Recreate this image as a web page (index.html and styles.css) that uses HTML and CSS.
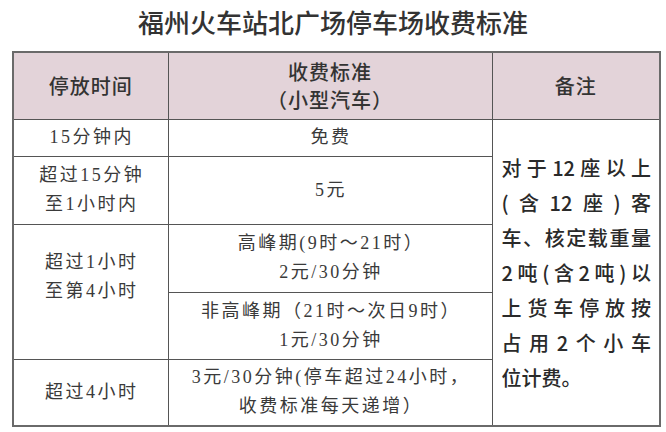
FILE: index.html
```html
<!DOCTYPE html>
<html lang="zh-CN">
<head>
<meta charset="utf-8">
<link rel="stylesheet" href="styles.css">
</head>
<body>
<h1 class="title">福州火车站北广场停车场收费标准</h1>
<div class="wrap">
<table class="fees">
  <colgroup>
    <col class="c1"><col class="c2"><col class="c3">
  </colgroup>
  <tr class="r-head">
    <th>停放时间</th>
    <th>收费标准<br>（小型汽车）</th>
    <th>备注</th>
  </tr>
  <tr class="r1">
    <td>15分钟内</td>
    <td>免费</td>
    <td class="note" rowspan="6">
      <div class="ln">对于12座以上</div>
      <div class="ln">(含12座)客</div>
      <div class="ln">车、核定载重量</div>
      <div class="ln">2吨(含2吨)以</div>
      <div class="ln">上货车停放按</div>
      <div class="ln">占用2个小车</div>
      <div class="ln last">位计费。</div>
    </td>
  </tr>
  <tr class="r2">
    <td>超过15分钟<br>至1小时内</td>
    <td>5元</td>
  </tr>
  <tr class="r3a">
    <td class="top" rowspan="2">超过1小时<br>至第4小时</td>
    <td>高峰期(9时～21时）<br>2元/30分钟</td>
  </tr>
  <tr class="r3b">
    <td>非高峰期（21时～次日9时）<br>1元/30分钟</td>
  </tr>
  <tr class="r4">
    <td>超过4小时</td>
    <td>3元/30分钟(停车超过24小时，<br>收费标准每天递增）</td>
  </tr>
</table>
</div>
</body>
</html>
```
FILE: styles.css
```css
html, body {
  margin: 0;
  padding: 0;
  background: #ffffff;
}
body {
  width: 666px;
  height: 432px;
  overflow: hidden;
  font-family: "Noto Sans CJK SC", "Noto Sans", sans-serif;
  color: #333;
}
.title {
  margin: 0;
  height: 51px;
  line-height: 44px;
  font-size: 26px;
  font-weight: 500;
  text-align: center;
  color: #333;
  letter-spacing: 0;
}
.wrap {
  padding-left: 12px;
}
.fees {
  width: 647px;
  table-layout: fixed;
  border-collapse: collapse;
  border: 2px solid #6a6a6a;
}
.c1 { width: 155px; }
.c2 { width: 324px; }
.c3 { width: 168px; }
.fees th, .fees td {
  border: 1px solid #555;
  padding: 0;
  text-align: center;
  vertical-align: middle;
}
.fees th {
  background: #e3d3d9;
  font-size: 20px;
  font-weight: 500;
  line-height: 28px;
  letter-spacing: 1px;
  color: #333;
}
.fees td {
  font-family: "Liberation Serif", "Noto Sans CJK SC", serif;
  font-size: 18px;
  line-height: 29px;
  letter-spacing: 2.5px;
  color: #3a3a3a;
  padding-left: 2px;
}
.r-head { height: 67px; }
.r1 { height: 37px; }
.r2 { height: 68px; }
.r3a { height: 68px; }
.r3b { height: 67px; }
.r4 { height: 67px; }
.fees td.top {
  vertical-align: top;
  padding-top: 23px;
}
.fees td.note {
  font-family: "Noto Sans CJK SC", "Noto Sans", sans-serif;
  font-size: 20px;
  font-weight: 500;
  line-height: 35px;
  letter-spacing: 0;
  color: #2a2a2a;
  padding: 0 8px 0 9px;
  text-align: justify;
}
.ln {
  text-align: justify;
  text-align-last: justify;
  white-space: nowrap;
}
.ln.last {
  text-align-last: left;
}
```
